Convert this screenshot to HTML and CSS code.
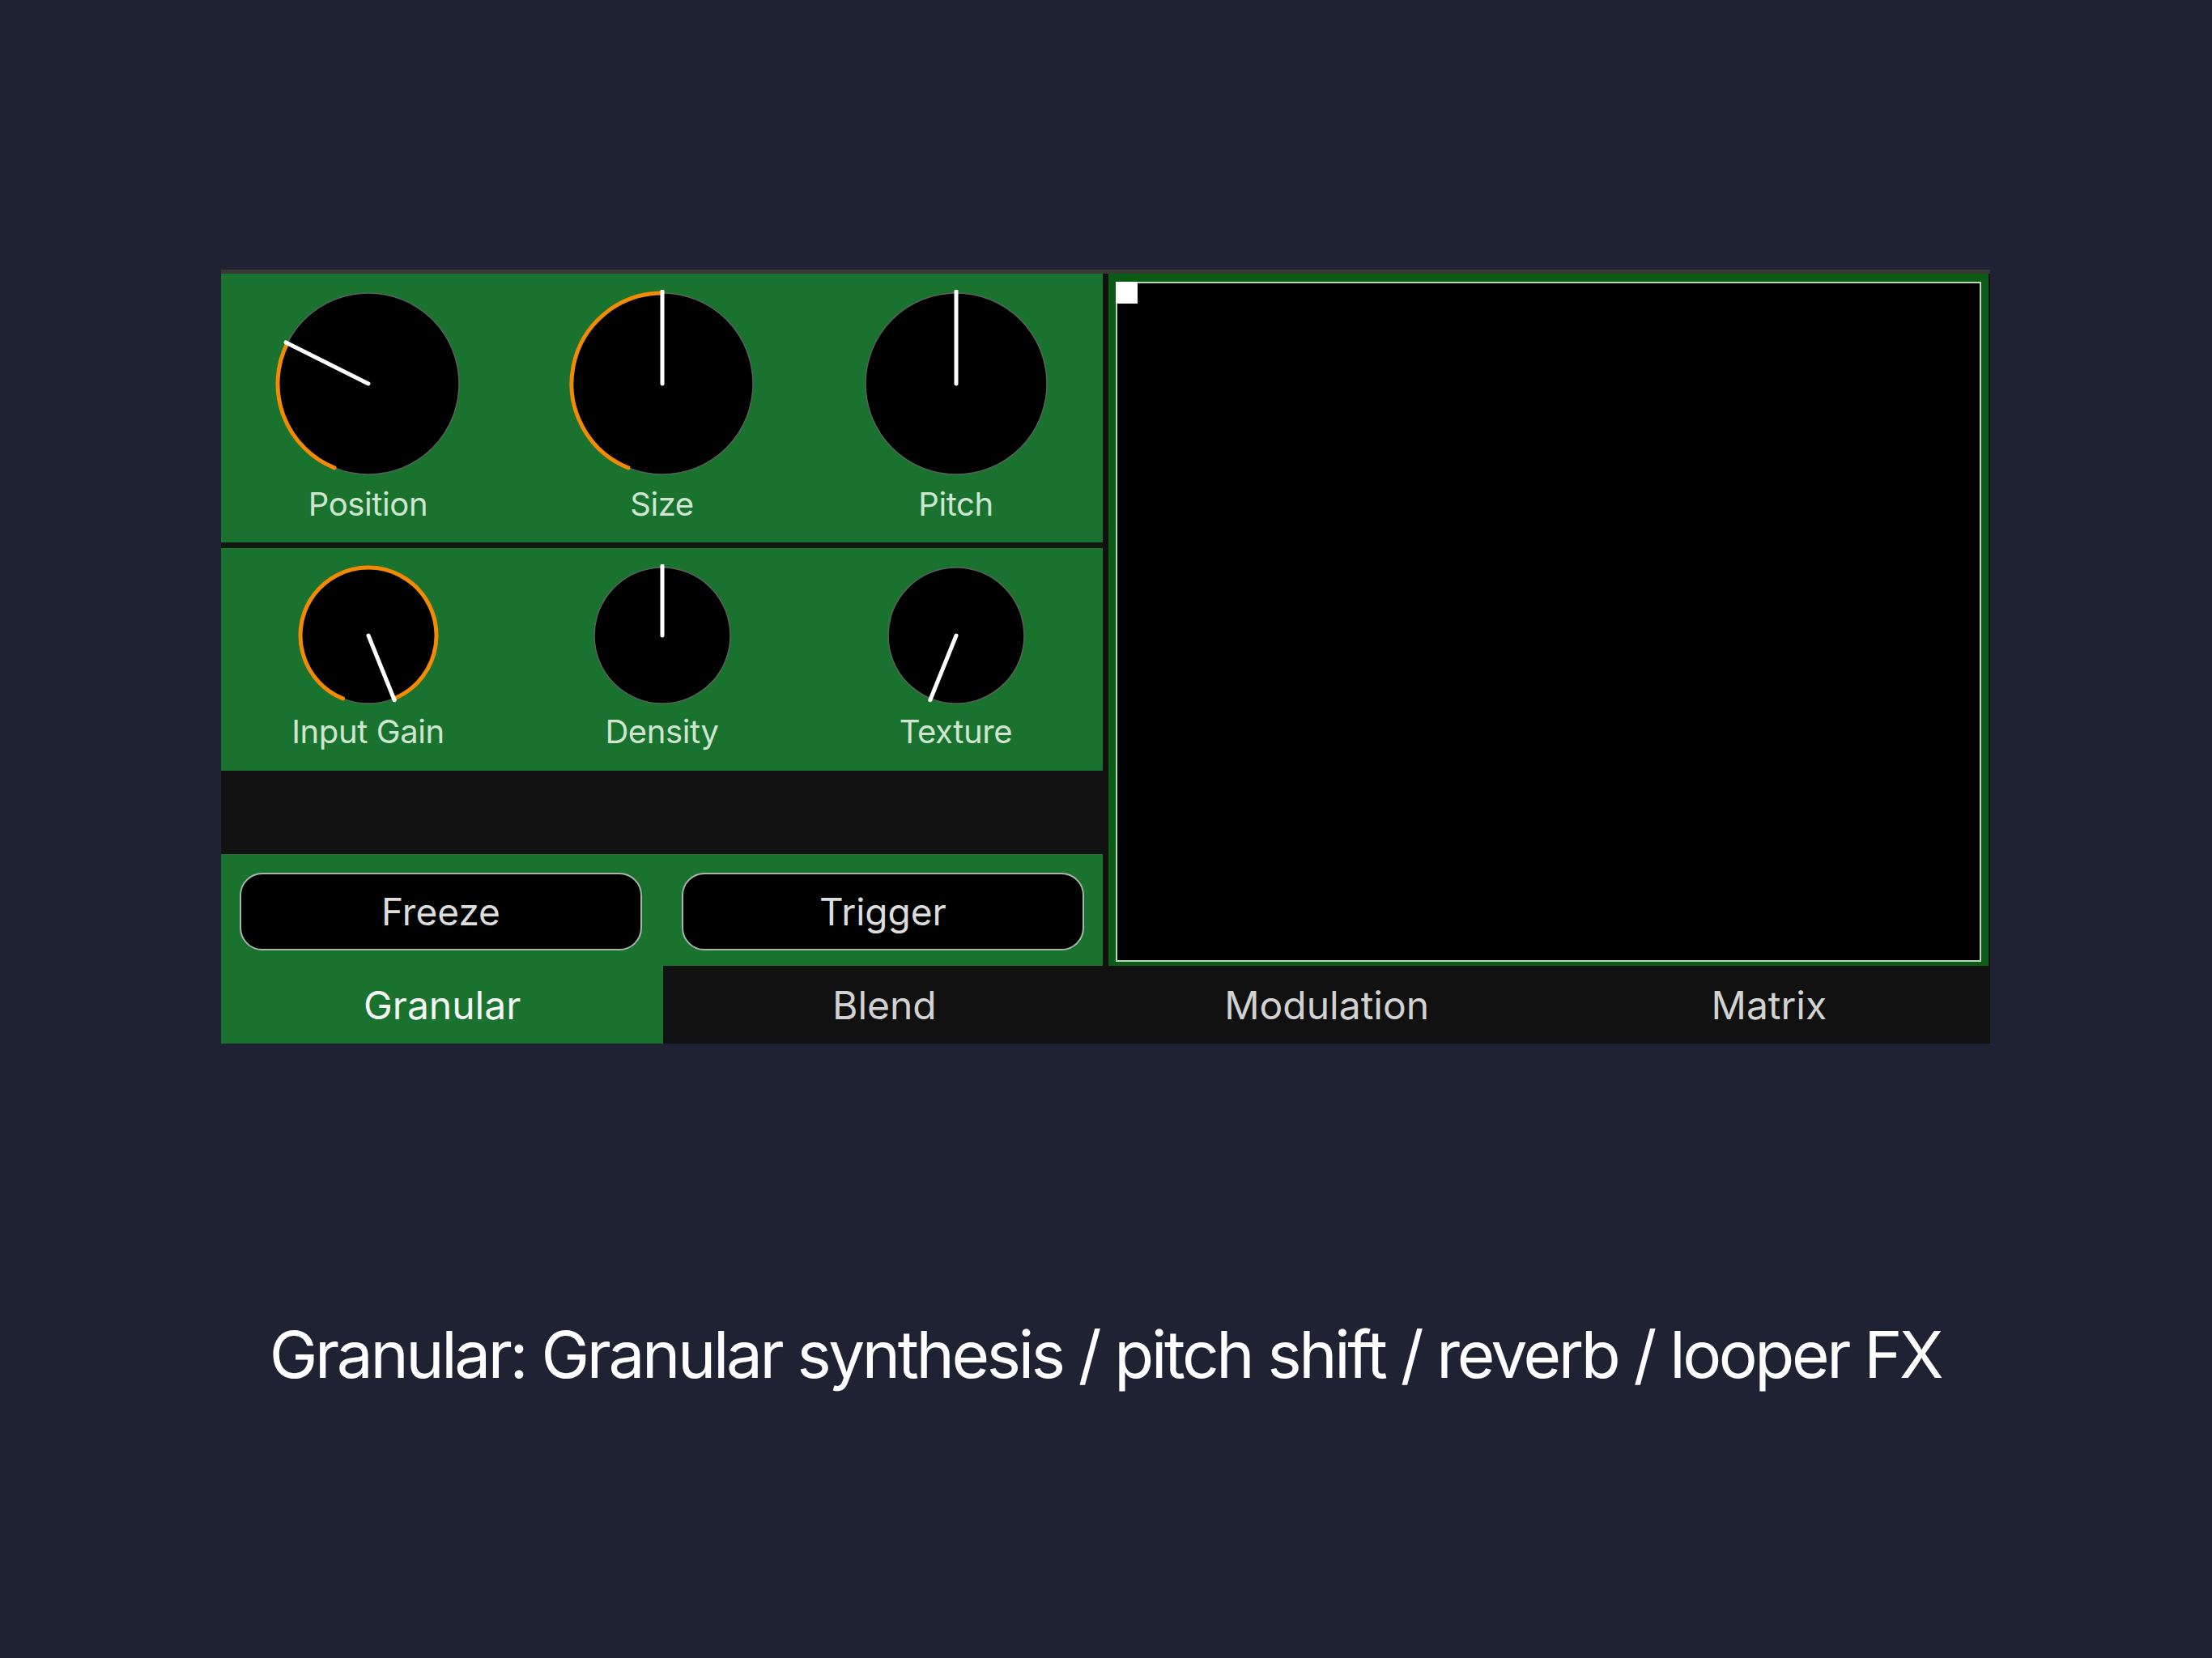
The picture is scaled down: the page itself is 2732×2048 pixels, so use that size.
FILE: index.html
```html
<!DOCTYPE html>
<html>
<head>
<meta charset="utf-8">
<link rel="stylesheet" href="styles.css">
</head>
<body>
<div class="stage">
  <div class="device">
    <div class="main">
      <div class="left">
        <div class="knob-row big">
          <div class="knob">
            <svg width="232" height="232" viewBox="0 0 232 232">
              <circle cx="116" cy="116" r="112" class="face"/>
              <path d="M74.04 219.85 A112 112 0 0 1 15.85 65.85" class="arc"/>
              <line x1="116" y1="116" x2="14.1" y2="64.95" class="ptr"/>
            </svg>
            <div class="label">Position</div>
          </div>
          <div class="knob">
            <svg width="232" height="232" viewBox="0 0 232 232">
              <circle cx="116" cy="116" r="112" class="face"/>
              <path d="M74.04 219.85 A112 112 0 0 1 116 4" class="arc"/>
              <line x1="116" y1="116" x2="116" y2="2" class="ptr"/>
            </svg>
            <div class="label">Size</div>
          </div>
          <div class="knob">
            <svg width="232" height="232" viewBox="0 0 232 232">
              <circle cx="116" cy="116" r="112" class="face"/>
              <line x1="116" y1="116" x2="116" y2="2" class="ptr"/>
            </svg>
            <div class="label">Pitch</div>
          </div>
        </div>
        <div class="sep"></div>
        <div class="knob-row small">
          <div class="knob">
            <svg width="176" height="176" viewBox="0 0 176 176">
              <circle cx="88" cy="88" r="84" class="face"/>
              <path d="M56.53 165.88 A84 84 0 1 1 119.47 165.88" class="arc"/>
              <line x1="88" y1="88" x2="120.2" y2="167.7" class="ptr"/>
            </svg>
            <div class="label">Input Gain</div>
          </div>
          <div class="knob">
            <svg width="176" height="176" viewBox="0 0 176 176">
              <circle cx="88" cy="88" r="84" class="face"/>
              <line x1="88" y1="88" x2="88" y2="2" class="ptr"/>
            </svg>
            <div class="label">Density</div>
          </div>
          <div class="knob">
            <svg width="176" height="176" viewBox="0 0 176 176">
              <circle cx="88" cy="88" r="84" class="face"/>
              <line x1="88" y1="88" x2="55.8" y2="167.7" class="ptr"/>
            </svg>
            <div class="label">Texture</div>
          </div>
        </div>
        <div class="gap"></div>
        <div class="buttons">
          <div class="btn">Freeze</div>
          <div class="btn">Trigger</div>
        </div>
      </div>
      <div class="colgap"></div>
      <div class="right">
        <div class="screen"><div class="marker"></div></div>
      </div>
      <div class="edge"></div>
    </div>
    <div class="tabs">
      <div class="tab active">Granular</div>
      <div class="tab">Blend</div>
      <div class="tab">Modulation</div>
      <div class="tab">Matrix</div>
    </div>
  </div>
  <div class="caption">Granular: Granular synthesis / pitch shift / reverb / looper FX</div>
</div>
</body>
</html>
```
FILE: styles.css
```css
html, body {
  margin: 0;
  padding: 0;
  background: #1f2233;
}
body {
  width: 2732px;
  height: 2048px;
  font-family: "Inter", "Liberation Sans", sans-serif;
}
.stage {
  padding-top: 333px;
  display: flex;
  flex-direction: column;
  align-items: center;
}
.device {
  width: 2185px;
  margin-left: -1px;
  border-top: 5px solid #383834;
  background: #111111;
}
.main {
  display: flex;
  height: 855px;
}
.left {
  width: 1089px;
  display: flex;
  flex-direction: column;
}
.knob-row {
  display: grid;
  grid-template-columns: repeat(3, 1fr);
  background: #19732f;
}
.knob-row.big {
  height: 332px;
  padding-top: 20px;
  box-sizing: border-box;
}
.knob-row.small {
  height: 275px;
  padding-top: 20px;
  box-sizing: border-box;
}
.knob {
  display: flex;
  flex-direction: column;
  align-items: center;
}
.knob svg {
  display: block;
}
.face {
  fill: #000;
  stroke: #56625a;
  stroke-width: 1.5;
}
.arc {
  fill: none;
  stroke: #f28a05;
  stroke-width: 5;
  stroke-linecap: round;
}
.ptr {
  stroke: #ffffff;
  stroke-width: 5;
  stroke-linecap: round;
}
.label {
  color: #cfe5cf;
  font-size: 40px;
  line-height: 48px;
  margin-top: 9px;
  letter-spacing: -0.01em;
}
.small .label {
  margin-top: 7px;
}
.sep {
  height: 7px;
  background: #0e1a10;
}
.gap {
  height: 103px;
  background: #111111;
}
.buttons {
  height: 138px;
  box-sizing: border-box;
  background: #19732f;
  padding: 23px 23px 19px 23px;
  display: flex;
  gap: 49px;
}
.btn {
  flex: 1;
  background: #000;
  border: 2px solid #a9b4aa;
  border-radius: 28px;
  display: flex;
  align-items: center;
  justify-content: center;
  color: #dcdcdc;
  font-size: 46px;
}
.colgap {
  width: 7px;
  background: #111111;
}
.right {
  width: 1087px;
  background: #0b5a16;
  padding: 10px 9px 5px 9px;
  box-sizing: border-box;
  display: flex;
}
.screen {
  flex: 1;
  background: #000;
  border: 2px solid #bcd6bc;
  position: relative;
}
.marker {
  position: absolute;
  left: -2px;
  top: -2px;
  width: 27px;
  height: 27px;
  background: #ffffff;
}
.edge {
  width: 2px;
  background: #111111;
}
.tabs {
  display: grid;
  grid-template-columns: repeat(4, 1fr);
  height: 96px;
}
.tab {
  display: flex;
  align-items: center;
  justify-content: center;
  color: #d2d2d2;
  font-size: 48px;
}
.tab.active {
  background: #19732f;
  color: #f5f5f5;
}
.caption {
  margin-top: 336px;
  color: #ffffff;
  font-size: 80px;
  line-height: 96px;
  letter-spacing: -0.042em;
  margin-left: -2px;
}
```
